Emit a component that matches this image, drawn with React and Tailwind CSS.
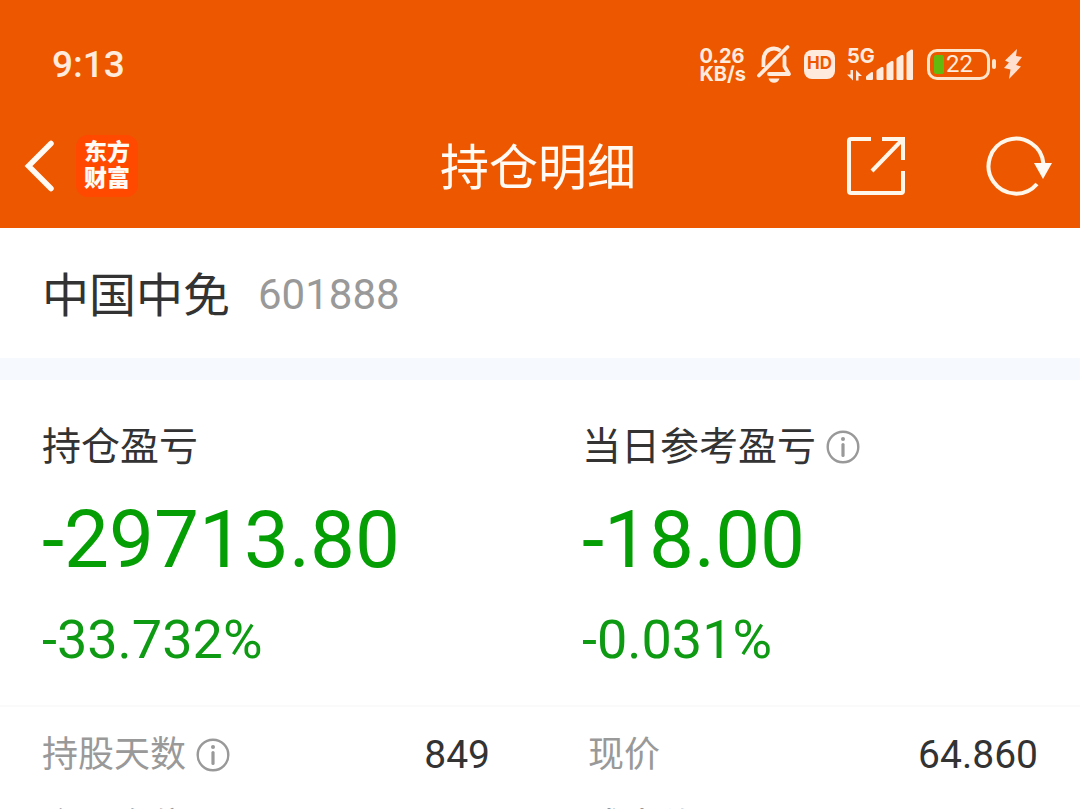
function IconBack() {
  return (
    <svg width="32" height="52" viewBox="0 0 32 52" fill="none">
      <path
        d="M27 3.500L4.500 26l22.500 22.500"
        stroke="#fffaf3"
        strokeWidth="5.500"
        strokeLinecap="round"
        strokeLinejoin="miter"
      />
    </svg>
  );
}

function IconShare() {
  return (
    <svg width="60" height="60" viewBox="0 0 60 60" fill="none">
      <path
        d="M25 3H5a2 2 0 0 0-2 2v50a2 2 0 0 0 2 2h50a2 2 0 0 0 2-2V35"
        stroke="#fff6ea"
        strokeWidth="4"
      />
      <path d="M36 3h21v21M56 4L26 35" stroke="#fff6ea" strokeWidth="4" />
    </svg>
  );
}

function IconRefresh() {
  return (
    <svg width="66" height="60" viewBox="0 0 66 60" fill="none">
      <path
        d="M51 48A27.500 27.500 0 1 1 57.500 28"
        stroke="#fff6ea"
        strokeWidth="4"
      />
      <path d="M48 27h18l-9 16z" fill="#fffaf3" />
    </svg>
  );
}

function IconMuted() {
  return (
    <svg width="36" height="40" viewBox="0 0 36 40" fill="none">
      <path
        d="M7.500 23V16C7.500 9 12 4.500 18 4.500c2.500 0 4.800.9 6.500 2.300"
        stroke="#ffebdd"
        strokeWidth="3.800"
      />
      <path
        d="M28.500 13v9.500l4.500 7.500H13"
        stroke="#ffebdd"
        strokeWidth="3.800"
        strokeLinecap="round"
        strokeLinejoin="round"
      />
      <path
        d="M31.500 3L3 31.500"
        stroke="#ffebdd"
        strokeWidth="3.800"
        strokeLinecap="round"
      />
      <path
        d="M12.500 34.500h11c-.8 2.800-2.800 4.200-5.500 4.200s-4.700-1.400-5.500-4.200z"
        fill="#ffebdd"
      />
    </svg>
  );
}

function IconSignal() {
  return (
    <svg width="66" height="36" viewBox="0 0 66 36" fill="#ffebdd">
      <path d="M3.500 24H6v10.500L0 28.500h3.500z" />
      <path d="M9 34.500V24l6 6h-3.500v4.500z" />
      <path d="M19 33v-2q0-1 1-1.500l4.500-3.500q1.500-.5 1.500 1v6q0 1-1 1h-5q-1 0-1-1z" />
      <path d="M29.500 33v-8q0-1 1-1.500l4-2.500q2-.5 2 1v11q0 1-1 1h-5q-1 0-1-1z" />
      <path d="M39.500 33V19q0-1 1-1.500l4-2.500q2-.5 2 1v17q0 1-1 1h-5q-1 0-1-1z" />
      <path d="M49.500 33V13q0-1 1-1.500l4-2.500q2-.5 2 1v23q0 1-1 1h-5q-1 0-1-1z" />
      <path d="M59.500 33V7.500q0-1 1-1.500l3.500-2.500q2-.5 2 1V33q0 1-1 1h-4.500q-1 0-1-1z" />
    </svg>
  );
}

function IconBolt() {
  return (
    <svg width="18" height="32" viewBox="0 0 18 32" fill="#ffe0d0">
      <path d="M13 1L1 12.500l4 2L0 20l6.500 1.500L5 31l12-12.500-5-1.500 6-8-6-1z" />
    </svg>
  );
}

function IconInfo() {
  return (
    <svg width="34" height="34" viewBox="0 0 34 34" fill="none">
      <circle cx="17" cy="17" r="15.300" stroke="#999999" strokeWidth="2.400" />
      <circle cx="17" cy="9" r="2" fill="#999999" />
      <path
        d="M17 14.500v11"
        stroke="#999999"
        strokeWidth="3.200"
        strokeLinecap="round"
      />
    </svg>
  );
}

function StatusBar() {
  return (
    <div className="flex h-[104px] items-center justify-between pt-6 pr-[58px] pl-[52px] text-[#ffebdd]">
      <span className="pt-0.5 text-[37px] leading-10 font-medium">9:13</span>
      <div className="flex items-center">
        <div className="mr-2.5 pt-0.5 font-['Inter',sans-serif] text-[20px] leading-[18px] font-bold">
          <p>0.26</p>
          <p>KB/s</p>
        </div>
        <IconMuted />
        <span className="mr-3 ml-3 flex h-[29px] w-[31px] items-center justify-center rounded-lg bg-[#ffebdd] font-['Inter',sans-serif] text-[17px] font-bold text-[#ed5700]">
          HD
        </span>
        <div className="relative mr-3.5">
          <IconSignal />
          <span className="absolute top-0 left-0 font-['Inter',sans-serif] text-[20px] leading-[20px] font-bold">
            5G
          </span>
        </div>
        <div className="flex h-[31px] w-[63px] items-center rounded-[10px] border-3 border-[#ffe4cc] pl-1">
          <span className="h-[19px] w-[10px] rounded-xs bg-[#64b90f]" />
          <span className="ml-0.5 text-[24px] leading-none">22</span>
        </div>
        <span className="mr-2 ml-0.5 h-2.5 w-1 rounded-sm bg-[#ffe4cc]" />
        <IconBolt />
      </div>
    </div>
  );
}

function NavBar() {
  return (
    <nav className="grid h-[124px] grid-cols-[1fr_auto_1fr] items-center pr-7 pl-6 text-[#fffaf3]">
      <div className="flex items-center gap-5">
        <button type="button" aria-label="返回">
          <IconBack />
        </button>
        <a
          href="#home"
          className="flex h-[62px] w-[62px] flex-col items-center justify-center rounded-xl bg-[#ff4800] text-[23px] leading-[26px] font-black"
        >
          <span>东方</span>
          <span>财富</span>
        </a>
      </div>
      <h1 className="pt-1 text-[49px] leading-none">持仓明细</h1>
      <div className="flex items-center justify-end gap-20">
        <button type="button" aria-label="分享">
          <IconShare />
        </button>
        <button type="button" aria-label="刷新">
          <IconRefresh />
        </button>
      </div>
    </nav>
  );
}

function ProfitBlock({ label, amount, rate, info }) {
  return (
    <div className="pl-[42px]">
      <div className="flex h-[54px] items-center gap-2.5 text-[39px] leading-none text-[#333333]">
        <h3>{label}</h3>
        {info && (
          <button type="button" aria-label="说明">
            <IconInfo />
          </button>
        )}
      </div>
      <p className="mt-4 text-[80px] leading-[100px] text-[#059e05]">{amount}</p>
      <p className="mt-4 text-[54px] leading-[68px] text-[#0f9a14]">{rate}</p>
    </div>
  );
}

function DetailItem({ label, value, info, className }) {
  return (
    <div className={`flex h-[72px] items-center justify-between ${className}`}>
      <dt className="flex items-center gap-2.5 text-[36px] leading-none text-[#999999]">
        {label}
        {info && (
          <button type="button" aria-label="说明">
            <IconInfo />
          </button>
        )}
      </dt>
      <dd className="text-[39px] leading-none text-[#333333]">{value}</dd>
    </div>
  );
}

const details = [
  { label: "持股天数", value: "849", info: true },
  { label: "现价", value: "64.860" },
  { label: "个股仓位" },
  { label: "成本价" },
];

export default function App() {
  return (
    <div className="h-screen overflow-hidden bg-white font-['Roboto','Noto_Sans_CJK_SC',sans-serif]">
      <header className="bg-[#ed5700]">
        <StatusBar />
        <NavBar />
      </header>

      <main>
        <section className="flex h-[130px] items-center gap-7 pt-1 pl-[42px]">
          <h2 className="text-[47px] leading-none text-[#333333]">中国中免</h2>
          <span className="text-[42px] leading-none text-[#999999]">601888</span>
        </section>

        <div className="h-[22px] bg-[#f6faff]" />

        <section className="grid grid-cols-2 border-b-2 border-[#fafafa] pt-10 pb-[31px]">
          <ProfitBlock label="持仓盈亏" amount="-29713.80" rate="-33.732%" />
          <ProfitBlock label="当日参考盈亏" amount="-18.00" rate="-0.031%" info />
        </section>

        <dl className="grid grid-cols-2 pt-3">
          {details.map((item, i) => (
            <DetailItem
              key={item.label}
              {...item}
              className={i % 2 ? "pr-[42px] pl-12" : "pr-[50px] pl-[42px]"}
            />
          ))}
        </dl>
      </main>
    </div>
  );
}
